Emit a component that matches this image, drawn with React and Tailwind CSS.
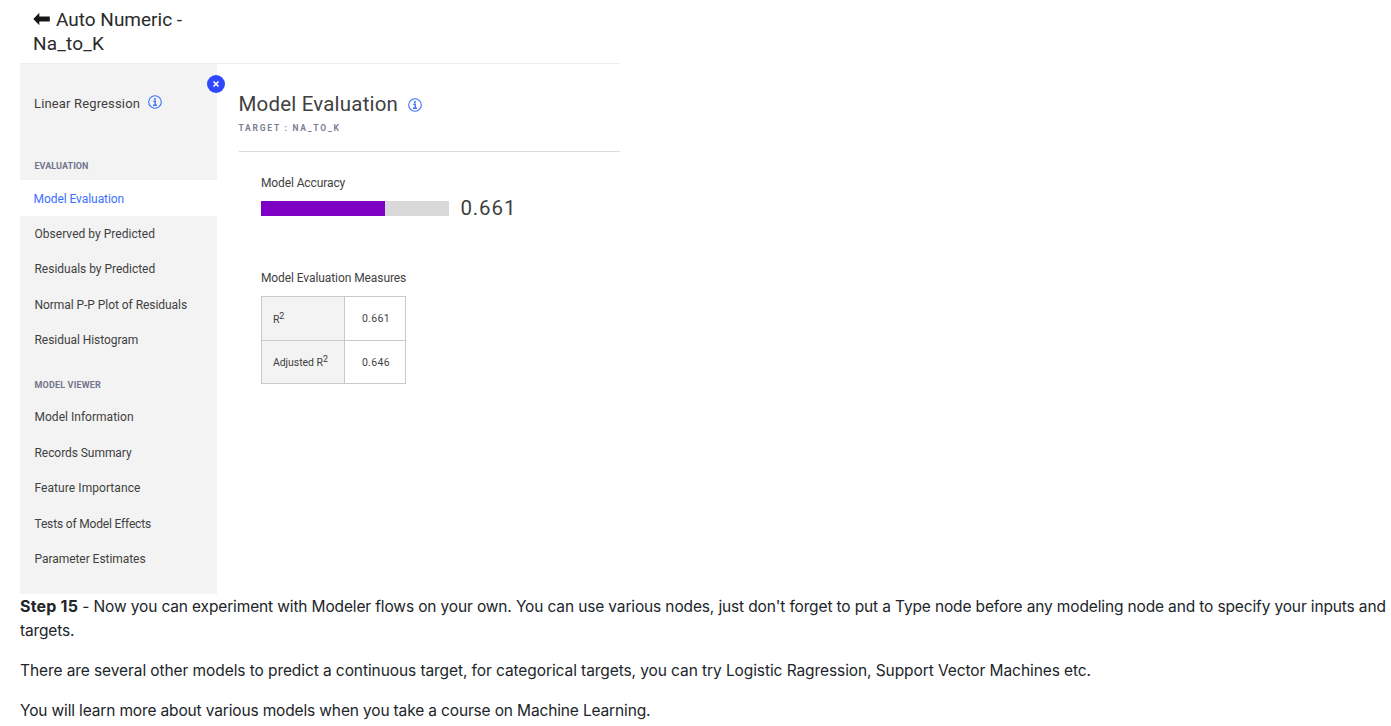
const evaluation = [
  ["Model Evaluation", "tracking-[-0.06px]"],
  ["Observed by Predicted", "tracking-[0.03px]"],
  ["Residuals by Predicted", "tracking-[-0.02px]"],
  ["Normal P-P Plot of Residuals", "tracking-[-0.05px]"],
  ["Residual Histogram", "tracking-[-0.05px]"],
];

const viewer = [
  ["Model Information", "tracking-[0.02px]"],
  ["Records Summary", "tracking-[-0.06px]"],
  ["Feature Importance", "tracking-[0.07px]"],
  ["Tests of Model Effects", "tracking-[-0.17px]"],
  ["Parameter Estimates", "tracking-[-0.05px]"],
];

const measures = [
  ["R", "0.661"],
  ["Adjusted R", "0.646"],
];

function Info() {
  return (
    <svg viewBox="0 0 14 14" className="size-[14px] shrink-0" fill="none" stroke="#3d70ff">
      <circle cx="7" cy="7" r="6.3" strokeWidth="1.1" />
      <path d="M5.3 6.2h1.9v4M5 10.2h4" strokeWidth="1.4" />
      <circle cx="7" cy="3.9" r="1" fill="#3d70ff" stroke="none" />
    </svg>
  );
}

function Row({ item, active }) {
  return (
    <li
      className={
        active
          ? "flex h-[35.5px] items-center bg-white pt-[2px] pl-[13.5px] text-[#3d70ff]"
          : "flex h-[35.5px] items-center pt-px pl-[14.5px]"
      }
    >
      <span className={item[1]}>{item[0]}</span>
    </li>
  );
}

function Sidebar() {
  return (
    <nav className="relative w-[196.5px] bg-[#f3f3f3]">
      <button className="absolute top-[11px] right-[-8px] flex size-[18px] items-center justify-center rounded-full bg-[#2f48ff]">
        <svg viewBox="0 0 6 6" className="size-[6px]" stroke="#fff" strokeWidth="1.5">
          <path d="M.5.5l5 5M5.5.5l-5 5" />
        </svg>
      </button>
      <div className="flex h-[80px] items-center gap-[8px] pl-[14px] text-[13px]">
        <span className="tracking-[0.15px]">Linear Regression</span>
        <span className="-mt-[4px] flex"><Info /></span>
      </div>
      <h3 className="h-[36px] pt-[10px] pl-[14.5px] text-[9px] font-bold tracking-[0.05px] text-[#73758b]">EVALUATION</h3>
      <ul>
        {evaluation.map((item, i) => (
          <Row key={item[0]} item={item} active={i === 0} />
        ))}
      </ul>
      <h3 className="h-[41.5px] pt-[15px] pl-[14.5px] text-[9px] font-bold tracking-[0.17px] text-[#73758b]">MODEL VIEWER</h3>
      <ul>
        {viewer.map((item) => (
          <Row key={item[0]} item={item} />
        ))}
      </ul>
    </nav>
  );
}

export default function App() {
  return (
    <main className="h-[726px] overflow-hidden bg-white pl-5 font-['Inter',sans-serif] text-[15.5px] leading-6 text-[#212529]">
      <section className="flex h-[594px] w-[600px] flex-col font-['Roboto',sans-serif] text-[12px] text-[#3f3f3f]">
        <header className="h-[64px] border-b border-[#ececec] pt-[8px] pl-[13px] text-[19px] text-[#2a2a2a]">
          <div className="flex items-center gap-[6px]">
            <svg viewBox="0 0 17 14" className="-mt-[2px] h-[14px] w-[17px]" fill="#161616">
              <path d="M.3 7 6.3.8v3.7h10.5v5H6.3v3.7z" />
            </svg>
            <span>Auto Numeric -</span>
          </div>
          <div className="tracking-[0.2px]">Na_to_K</div>
        </header>
        <div className="flex min-h-0 flex-1">
          <Sidebar />
          <div className="ml-[22px] flex-1">
            <div className="h-[88px] border-b border-[#dcdcdc] pt-[28px]">
              <h1 className="flex items-center gap-[10px] text-[20.5px]">
                <span className="tracking-[0.19px]">Model Evaluation</span>
                <span className="mt-px flex"><Info /></span>
              </h1>
              <p className="text-[8.5px] font-bold tracking-[1.75px] text-[#7d7f94]">TARGET : NA_TO_K</p>
            </div>
            <div className="pt-[19px] pl-[22.4px]">
              <p className="tracking-[-0.1px]">Model Accuracy</p>
              <div className="mt-px flex items-center gap-[11.5px]">
                <div className="h-[15px] w-[188px] bg-[#d8d8d8]">
                  <div className="h-full w-[124px] bg-[#7d00c4]" />
                </div>
                <span className="text-[20.5px] tracking-[0.9px]">0.661</span>
              </div>
              <p className="mt-[46px] tracking-[-0.08px]">Model Evaluation Measures</p>
              <table className="mt-[6px] w-[145px] border-collapse text-[10.5px] leading-none">
                <tbody>
                  {measures.map(([name, value]) => (
                    <tr key={name} className="h-[43.5px]">
                      <th className="w-[83px] border border-[#c9c9c9] bg-[#f3f3f3] p-0 pt-[3px] pl-[11px] text-left font-normal tracking-[-0.05px]">
                        {name}
                        <sup className="-top-[4px] text-[9px] leading-none">2</sup>
                      </th>
                      <td className="border border-[#c9c9c9] p-0 pt-[2px] pl-[2px] text-center tracking-[0.32px]">{value}</td>
                    </tr>
                  ))}
                </tbody>
              </table>
            </div>
          </div>
        </div>
      </section>
      <p className="tracking-[-0.14px]">
        <b className="text-[16px] tracking-[0.2px]">Step 15</b> - Now you can experiment with Modeler flows on your own. You can use various nodes, just don't forget to put a Type node before any modeling node and to specify your inputs and targets.
      </p>
      <p className="mt-4 tracking-[-0.085px]">
        There are several other models to predict a continuous target, for categorical targets, you can try Logistic Ragression, Support Vector Machines etc.
      </p>
      <p className="mt-4 tracking-[-0.15px]">You will learn more about various models when you take a course on Machine Learning.</p>
    </main>
  );
}
